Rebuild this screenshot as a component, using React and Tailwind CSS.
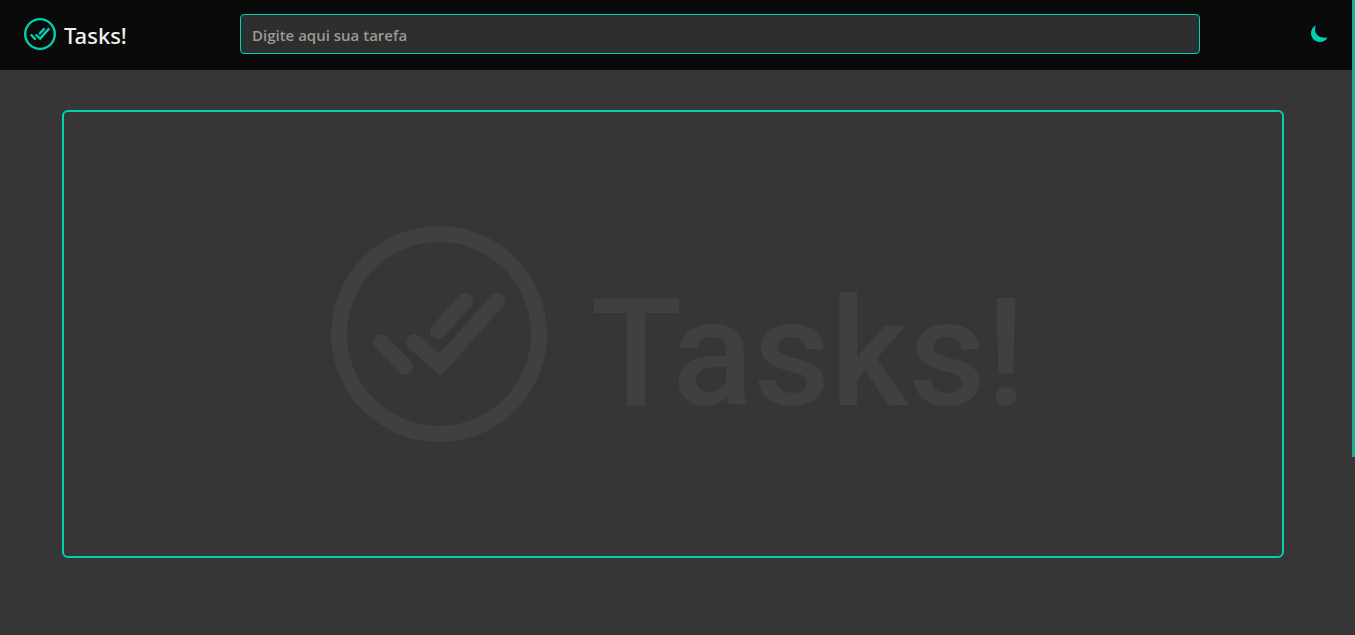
function LogoMark({ className }) {
  return (
    <svg viewBox="0 0 216 216" className={className} fill="none" stroke="currentColor" strokeWidth="16" aria-hidden="true">
      <circle cx="108" cy="108" r="100" strokeWidth="16" />
      <g strokeLinecap="round">
        <path d="M50 116L74 141" />
        <path d="M83 116L109 139L166 75" />
        <path d="M107 105L134 75" />
      </g>
    </svg>
  );
}

function Header() {
  return (
    <header className="flex h-[70px] shrink-0 items-center bg-[#0a0a0a] px-6 pb-0.5">
      <a href="#" className="flex w-54 shrink-0 items-center gap-2 text-[#00d1b2]">
        <LogoMark className="size-8" />
        <span className="pt-0.5 font-['Noto_Sans',sans-serif] text-[22px] font-medium text-[#f0f0ee]">Tasks!</span>
      </a>
      <form className="min-w-0 flex-1" onSubmit={(e) => e.preventDefault()}>
        <input
          type="text"
          aria-label="Digite aqui sua tarefa"
          placeholder="Digite aqui sua tarefa"
          className="block h-10 w-full rounded border border-[#00d1b2] bg-[#2e2e2e] px-[11px] pt-0.5 text-[15px] font-semibold text-white outline-none placeholder:text-[#9b9a92]"
        />
      </form>
      <div className="flex w-32 shrink-0 justify-end">
        <button type="button" aria-label="Alternar tema" className="text-[#00d1b2]">
          <svg viewBox="0 0 18 18" className="size-[18px]" fill="currentColor" aria-hidden="true">
            <path d="M5.800 0.400C2.800 1.800 1 4.600 1 8c0 5 4 9 9 9 3.200 0 6-1.700 7.600-4.500C11 13.800 5 10.300 5 4.500 5 3 5.300 1.600 5.800 0.400Z" />
          </svg>
        </button>
      </div>
    </header>
  );
}

export default function App() {
  return (
    <div className="flex h-screen bg-[#363636] font-['Open_Sans','Noto_Sans',sans-serif]">
      <div className="flex min-w-0 flex-1 flex-col">
        <Header />
        <main className="flex-1 pt-10 pr-[68px] pl-[62px]">
          <section className="flex min-h-112 items-center justify-center gap-11 rounded-md border-2 border-[#00d1b2] pl-2.5 text-[#404040]">
            <LogoMark className="size-54 shrink-0" />
            <h1 className="pt-10 font-['Roboto',sans-serif] text-[150px] leading-none font-medium">Tasks!</h1>
          </section>
        </main>
      </div>
      <div className="w-[3px] shrink-0">
        <div className="h-[72%] bg-[#12af98]" />
      </div>
    </div>
  );
}
